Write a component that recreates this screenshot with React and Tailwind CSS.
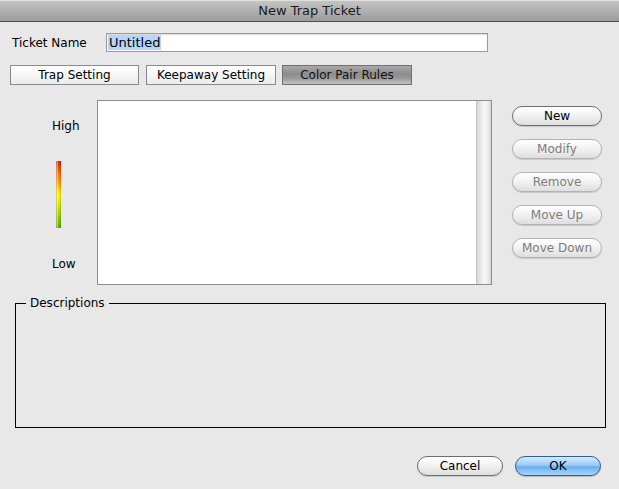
import React from 'react';

const aquaBtn =
  'h-[20px] rounded-full border flex items-center justify-center text-[12px] leading-none bg-gradient-to-b from-white via-[#f1f1f1] to-[#dedede] shadow-[0_1px_1px_rgba(0,0,0,0.15)]';

const SideButton = ({ label, enabled }) => (
  <button
    className={`${aquaBtn} w-[90px] ${
      enabled ? 'border-[#6f6f6f] text-black' : 'border-[#b3b3b3] text-[#7d7d7d]'
    }`}
  >
    {label}
  </button>
);

const Tab = ({ label, width, active }) => (
  <div
    className={`h-[20px] ${width} border flex items-center justify-center text-[12px] ${
      active
        ? 'border-[#707070] bg-[linear-gradient(to_bottom,#a9a9a9,#8c8c8c_45%,#9a9a9a_70%,#c4c4c4)] text-[#111]'
        : 'border-[#8a8a8a] bg-gradient-to-b from-white to-[#ececec] text-black'
    }`}
  >
    {label}
  </div>
);

export default function App() {
  const sideButtons = [
    { label: 'New', enabled: true },
    { label: 'Modify', enabled: false },
    { label: 'Remove', enabled: false },
    { label: 'Move Up', enabled: false },
    { label: 'Move Down', enabled: false },
  ];

  return (
    <div className="w-[619px] h-[489px] bg-[#e8e8e8] flex flex-col font-['DejaVu_Sans',sans-serif] text-[12px] text-black overflow-hidden">
      {/* title bar */}
      <div className="h-[22px] shrink-0 border-b border-[#4f4f4f] bg-gradient-to-b from-[#c6c6c6] to-[#9c9c9c] shadow-[inset_0_1px_0_#dedede] flex items-center justify-center text-[13px] text-[#1a1a1a]">
        New Trap Ticket
      </div>

      {/* ticket name */}
      <div className="mt-[11px] h-[19px] flex items-center pl-[12px]">
        <span className="w-[94px] leading-none">Ticket Name</span>
        <div className="w-[382px] h-[19px] border border-[#9a9a9a] bg-white shadow-[inset_0_1px_1px_rgba(0,0,0,0.15)] flex items-center pl-[1px]">
          <span className="bg-[#b5d5ff] px-[1px] leading-[15px] text-[13px]">Untitled</span>
        </div>
      </div>

      {/* tabs */}
      <div className="mt-[13px] flex pl-[10px]">
        <Tab label="Trap Setting" width="w-[129px]" />
        <div className="ml-[7px]">
          <Tab label="Keepaway Setting" width="w-[130px]" />
        </div>
        <div className="ml-[6px]">
          <Tab label="Color Pair Rules" width="w-[130px]" active />
        </div>
      </div>

      {/* rules area */}
      <div className="mt-[15px] h-[185px] flex shrink-0">
        <div className="w-[97px] flex flex-col pl-[52px] pt-[19px]">
          <span className="leading-[15px]">High</span>
          <div className="mt-[27px] ml-[4px] w-[5px] h-[67px] bg-[linear-gradient(to_bottom,#d42200,#ff6a00_18%,#ff9a00_32%,#fff200_50%,#c8e000_70%,#5aa800)] shadow-[inset_1px_0_0_rgba(0,0,0,0.15),inset_-1px_0_0_rgba(0,0,0,0.15),inset_2px_0_0_rgba(255,255,255,0.45)]" />
          <span className="mt-[29px] leading-[15px]">Low</span>
        </div>
        <div className="w-[395px] h-[185px] border border-[#8e8e8e] bg-white flex">
          <div className="flex-1" />
          <div className="w-[15px] border-l border-[#c4c4c4] bg-[linear-gradient(to_right,#d6d6d6,#f8f8f8_50%,#ececec_80%,#d4d4d4)]" />
        </div>
        <div className="ml-[20px] pt-[6px] flex flex-col gap-[13px]">
          {sideButtons.map((b) => (
            <SideButton key={b.label} label={b.label} enabled={b.enabled} />
          ))}
        </div>
      </div>

      {/* descriptions */}
      <fieldset className="mt-[10px] ml-[15px] w-[591px] h-[133px] border border-black px-0 pb-0">
        <legend className="ml-[10px] px-[4px] leading-[16px]">Descriptions</legend>
      </fieldset>

      {/* footer buttons */}
      <div className="mt-[28px] flex justify-end pr-[18px] gap-[12px]">
        <button className={`${aquaBtn} w-[86px] border-[#6f6f6f]`}>Cancel</button>
        <button className="h-[20px] w-[86px] rounded-full border border-[#2f5f9a] flex items-center justify-center text-[12px] leading-none bg-[linear-gradient(to_bottom,#d3e9fc,#9ccbf5_45%,#6aaeee_55%,#a9d6fb)] shadow-[0_1px_1px_rgba(0,0,0,0.2)]">
          OK
        </button>
      </div>
    </div>
  );
}
